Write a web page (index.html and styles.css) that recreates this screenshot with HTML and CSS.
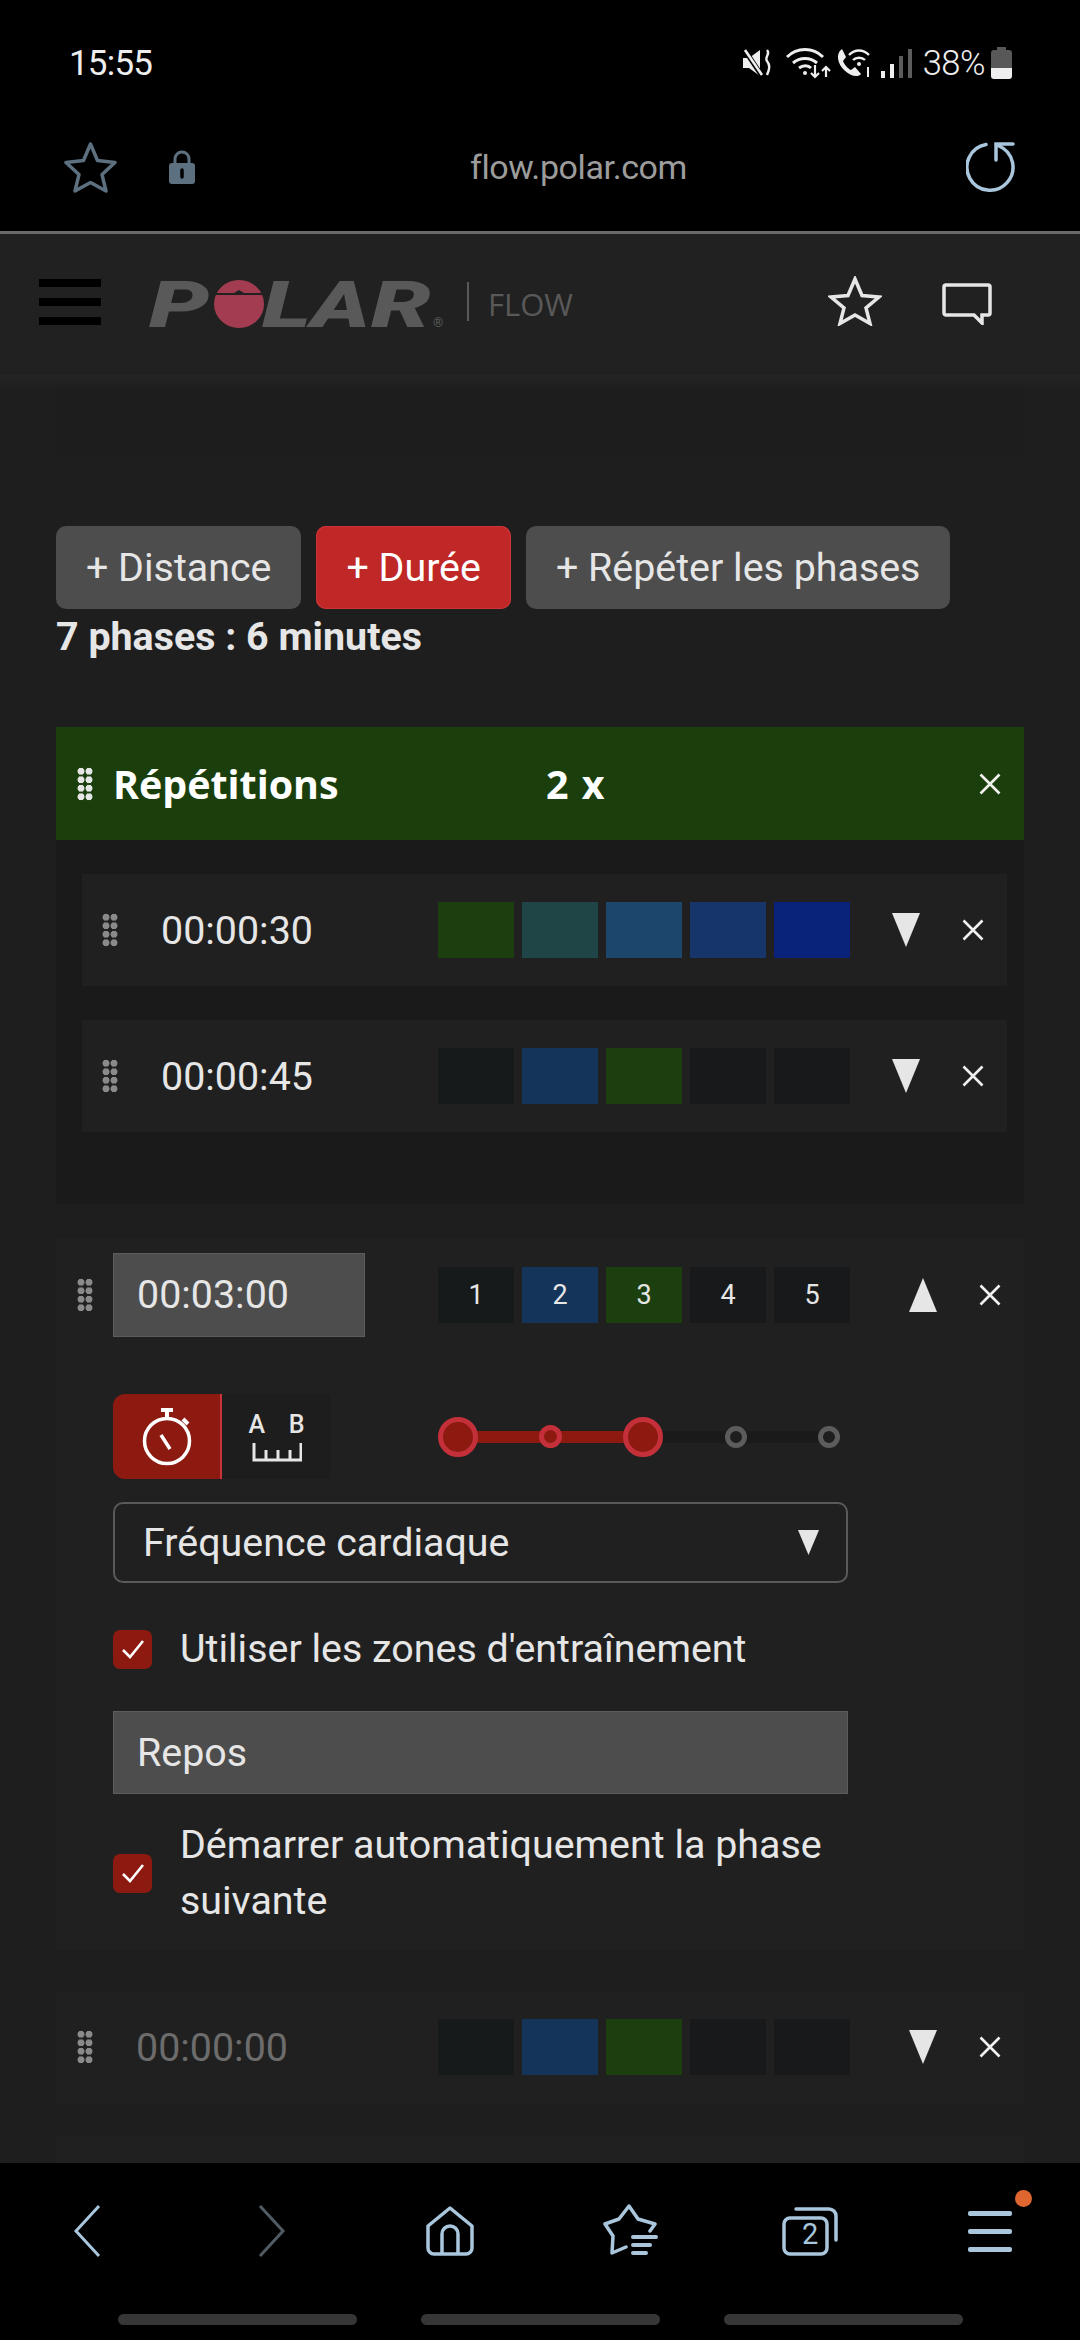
FILE: index.html
```html
<!DOCTYPE html>
<html lang="fr">
<head>
    <meta charset="UTF-8">
    <meta name="viewport" content="width=device-width, initial-scale=1.0">
    <title>Polar Flow</title>
    <link rel="stylesheet" href="styles.css">
</head>
<body>
    <svg class="defs" width="0" height="0">
        <symbol id="close" viewBox="0 0 22 22"><path d="M1.500 1.500l19 19M20.500 1.500l-19 19" fill="none" stroke="currentColor" stroke-width="2.600"/></symbol>
        <symbol id="check" viewBox="0 0 26 22"><path d="M3 12l7 7L23 3" fill="none" stroke="currentColor" stroke-width="2.600"/></symbol>
    </svg>
    <div class="phone">
        <!-- Android status bar -->
        <div class="status-bar">
            <span class="clock">15:55</span>
            <div class="status-icons">
                <svg class="ico-mute" width="29" height="28" viewBox="0 0 29 28">
                    <path d="M0 9h6L17 1v26L6 19H0z" fill="#eee"/>
                    <path d="M1 0l18 27" stroke="#000" stroke-width="5"/>
                    <path d="M2 1l17 25" stroke="#eee" stroke-width="2.600"/>
                    <path d="M24 1c4 4-3 7 0 11s3 7 0 14" fill="none" stroke="#eee" stroke-width="2.400"/>
                </svg>
                <svg class="ico-wifi" width="45" height="31" viewBox="0 0 45 31">
                    <path d="M1 9c10-10 26-10 36 0M7 15c7-6 17-6 24 0M13 20c4-3 9-3 12 0" fill="none" stroke="#eee" stroke-width="3"/>
                    <circle cx="19" cy="25" r="2" fill="#eee"/>
                    <path d="M29 17v12M25 25l4 4 4-4M40 29V19M36 23l4-4 4 4" fill="none" stroke="#eee" stroke-width="2.200"/>
                </svg>
                <svg class="ico-call" width="36" height="30" viewBox="0 0 36 30">
                    <path d="M7 1C0 6 3 16 9 22s14 8 17 4l-6-7-4 3c-3-1-7-6-8-9l3-4z" fill="#eee"/>
                    <path d="M14 7c6-6 14-6 20 0M18 12c3-3 9-3 12 0" fill="none" stroke="#eee" stroke-width="2.400"/>
                    <circle cx="24" cy="16" r="2" fill="#eee"/>
                    <path d="M33 19v10" stroke="#eee" stroke-width="2"/>
                </svg>
                <div class="signal">
                    <i class="bar bar-1"></i><i class="bar bar-2"></i><i class="bar bar-3"></i><i class="bar bar-4"></i>
                </div>
                <span class="battery-text">38%</span>
                <svg class="ico-battery" width="21" height="32" viewBox="0 0 21 32">
                    <path d="M6 0h9v3h3a3 3 0 0 1 3 3v15H0V6a3 3 0 0 1 3-3h3z" fill="#585858"/>
                    <path d="M0 21h21v8a3 3 0 0 1-3 3H3a3 3 0 0 1-3-3z" fill="#eee"/>
                </svg>
            </div>
        </div>

        <!-- Browser address bar -->
        <div class="address-bar">
            <svg class="ico-fav" width="55" height="52" viewBox="0 0 55 52">
                <path d="M27.500 3l7 16.500 17.500 2-13 12 4 16.500-15.500-8.500L12 50l4-16.500-13-12 17.500-2z" fill="none" stroke="#5d7080" stroke-width="3.500" stroke-linejoin="round"/>
            </svg>
            <svg class="ico-lock" width="26" height="34" viewBox="0 0 26 34">
                <path d="M6 15V9a7 7 0 0 1 14 0v6" fill="none" stroke="#5d7080" stroke-width="3"/>
                <path d="M3 13h20a3 3 0 0 1 3 3v15a3 3 0 0 1-3 3H3a3 3 0 0 1-3-3V16a3 3 0 0 1 3-3z" fill="#5d7080"/>
                <path d="M13 20v7" stroke="#000" stroke-width="3.500" stroke-linecap="round"/>
            </svg>
            <span class="url">flow.polar.com</span>
            <svg class="ico-reload" width="50" height="50" viewBox="0 0 50 50">
                <path d="M20 2.500A23 23 0 1 0 33 4M47 2H30v16" fill="none" stroke="#a9c6dc" stroke-width="3.500" stroke-linecap="round"/>
            </svg>
        </div>

        <!-- Page -->
        <div class="page">
            <div class="site-header">
                <div class="hamburger"><i></i><i></i><i></i></div>
                <svg class="polar-logo" width="300" height="52" viewBox="0 0 300 52">
                    <text class="polar-letters" x="-2" y="49" textLength="60" lengthAdjust="spacingAndGlyphs">P</text>
                    <ellipse cx="88" cy="26" rx="25" ry="24" fill="#a33c50"/>
                    <path d="M63 15h20l5-3 5 3h20v2H63z" fill="#212121"/>
                    <text class="polar-letters" x="111" y="49" textLength="49" lengthAdjust="spacingAndGlyphs">L</text>
                    <text class="polar-letters" x="160" y="49" textLength="59" lengthAdjust="spacingAndGlyphs">A</text>
                    <text class="polar-letters" x="220" y="49" textLength="60" lengthAdjust="spacingAndGlyphs">R</text>
                    <text class="polar-reg" x="282" y="49">®</text>
                </svg>
                <span class="flow-label">FLOW</span>
                <svg class="ico-star" width="54" height="50" viewBox="0 0 54 50">
                    <path d="M27 3l7 16.500 17 1.500-13 11 4 15.500-15-8.500-15 8.500 4-15.500L3 21l17-1.500z" fill="none" stroke="#e6e6e6" stroke-width="3.500"/>
                </svg>
                <svg class="ico-chat" width="50" height="42" viewBox="0 0 50 42">
                    <path d="M4 2h42a2 2 0 0 1 2 2v26a2 2 0 0 1-2 2h-6v8l-8-8H4a2 2 0 0 1-2-2V4a2 2 0 0 1 2-2z" fill="none" stroke="#e6e6e6" stroke-width="3.500"/>
                </svg>
            </div>

            <div class="top-band"><div class="top-strip"></div></div>

            <div class="add-buttons">
                <button class="add-btn">+ Distance</button>
                <button class="add-btn add-btn-red">+ Durée</button>
                <button class="add-btn">+ Répéter les phases</button>
            </div>
            <div class="summary">7 phases : 6 minutes</div>

            <div class="repeat-head">
                <div class="grip grip-light"></div>
                <span class="repeat-title">Répétitions</span>
                <span class="repeat-count">2 x</span>
                <svg class="close"><use href="#close"/></svg>
            </div>
            <div class="repeat-body">
                <div class="phase-row inner">
                    <div class="grip"></div>
                    <span class="time">00:00:30</span>
                    <div class="zones">
                        <div class="zone z-green"></div>
                        <div class="zone z-teal"></div>
                        <div class="zone z-sky"></div>
                        <div class="zone z-blue"></div>
                        <div class="zone z-navy"></div>
                    </div>
                    <div class="tri tri-down"></div>
                    <svg class="close"><use href="#close"/></svg>
                </div>
                <div class="phase-row inner">
                    <div class="grip"></div>
                    <span class="time">00:00:45</span>
                    <div class="zones">
                        <div class="zone z-off1"></div>
                        <div class="zone z-mid"></div>
                        <div class="zone z-green"></div>
                        <div class="zone z-off2"></div>
                        <div class="zone z-off2"></div>
                    </div>
                    <div class="tri tri-down"></div>
                    <svg class="close"><use href="#close"/></svg>
                </div>
            </div>

            <!-- Expanded phase -->
            <div class="panel expanded">
                <div class="phase-row open">
                    <div class="grip"></div>
                    <div class="time-input">00:03:00</div>
                    <div class="zones">
                        <div class="zone z-off1">1</div>
                        <div class="zone z-mid">2</div>
                        <div class="zone z-green">3</div>
                        <div class="zone z-off2">4</div>
                        <div class="zone z-off2">5</div>
                    </div>
                    <div class="tri tri-up"></div>
                    <svg class="close"><use href="#close"/></svg>
                </div>

                <div class="form">
                    <div class="type-row">
                        <div class="type-tabs">
                            <div class="type-tab active">
                                <svg width="50" height="58" viewBox="0 0 50 58">
                                    <path d="M19 2h12M25 2v8M41 11l5 5" fill="none" stroke="#fff" stroke-width="4"/>
                                    <circle cx="25" cy="33" r="22.500" fill="none" stroke="#fff" stroke-width="3.500"/>
                                    <path d="M19 27l9 14" stroke="#fff" stroke-width="3.500"/>
                                </svg>
                            </div>
                            <div class="type-tab">
                                <div class="ab"><span>A</span><span>B</span></div>
                                <svg width="50" height="20" viewBox="0 0 50 20">
                                    <path d="M2 1v17h47V1M14 8v10M26 8v10M38 8v10" fill="none" stroke="#e6e6e6" stroke-width="3"/>
                                </svg>
                            </div>
                        </div>
                        <div class="slider">
                            <div class="handle big"></div>
                            <div class="handle small"></div>
                            <div class="handle big"></div>
                            <div class="handle off"></div>
                            <div class="handle off"></div>
                        </div>
                    </div>

                    <div class="select">
                        <span>Fréquence cardiaque</span>
                        <div class="tri tri-select"></div>
                    </div>

                    <label class="check-row first">
                        <span class="checkbox"><svg width="26" height="22"><use href="#check"/></svg></span>
                        <span>Utiliser les zones d'entraînement</span>
                    </label>

                    <div class="name-input">Repos</div>

                    <label class="check-row second">
                        <span class="checkbox"><svg width="26" height="22"><use href="#check"/></svg></span>
                        <span>Démarrer automatiquement la phase suivante</span>
                    </label>
                </div>
            </div>

            <div class="panel collapsed">
                <div class="phase-row open">
                    <div class="grip"></div>
                    <span class="time muted">00:00:00</span>
                    <div class="zones">
                        <div class="zone z-off1"></div>
                        <div class="zone z-mid"></div>
                        <div class="zone z-green"></div>
                        <div class="zone z-off2"></div>
                        <div class="zone z-off2"></div>
                    </div>
                    <div class="tri tri-down"></div>
                    <svg class="close"><use href="#close"/></svg>
                </div>
            </div>
            <div class="panel peek"></div>
        </div>

        <!-- Browser bottom bar -->
        <div class="bottom-bar">
            <div class="nav-grid">
                <div class="nav-item nav-back">
                    <svg width="28" height="54" viewBox="0 0 28 54"><path d="M26 2L3 27l23 25" fill="none" stroke="#a9c6dc" stroke-width="3"/></svg>
                </div>
                <div class="nav-item nav-forward">
                    <svg width="28" height="54" viewBox="0 0 28 54"><path d="M2 2l23 25L2 52" fill="none" stroke="#515b63" stroke-width="3"/></svg>
                </div>
                <div class="nav-item">
                    <svg width="50" height="50" viewBox="0 0 50 50"><path d="M25 2L3 20v22a6 6 0 0 0 6 6h32a6 6 0 0 0 6-6V20zM17 47V28a8 8 0 0 1 16 0v19" fill="none" stroke="#a9c6dc" stroke-width="3.500" stroke-linejoin="round"/></svg>
                </div>
                <div class="nav-item">
                    <svg width="56" height="54" viewBox="0 0 56 54"><path d="M48 27l5-7-17-5L27 2 17 15 3 20l8 12-1 17 14-6" fill="none" stroke="#a9c6dc" stroke-width="3.500" stroke-linejoin="round" stroke-linecap="round"/><path d="M31 33h23M31 41h17M31 49h13" stroke="#a9c6dc" stroke-width="4" stroke-linecap="round"/></svg>
                </div>
                <div class="nav-item tabs-ico">
                    <svg width="56" height="50" viewBox="0 0 56 50"><rect x="2" y="12" width="43" height="36" rx="6" fill="none" stroke="#a9c6dc" stroke-width="3.500"/><path d="M14 3h33a7 7 0 0 1 7 7v24" fill="none" stroke="#a9c6dc" stroke-width="3.500" stroke-linecap="round"/></svg>
                    <span class="tab-count">2</span>
                </div>
                <div class="nav-item menu-ico">
                    <i></i><i></i><i></i>
                    <span class="notify-dot"></span>
                </div>
            </div>
            <div class="home-pills"><i></i><i></i><i></i></div>
        </div>
    </div>
</body>
</html>
```

FILE: styles.css
```css
/* General */
body {
    margin: 0;
    background: #000;
    font-family: 'Roboto', sans-serif;
    color: #e6e6e6;
}

.defs {
    position: absolute;
}

.phone {
    width: 1080px;
    height: 2340px;
    display: flex;
    flex-direction: column;
    overflow: hidden;
}

/* Status bar */
.status-bar {
    height: 126px;
    box-sizing: border-box;
    padding: 46px 68px 0 69px;
    display: flex;
    justify-content: space-between;
    align-items: flex-start;
    background: #000;
}

.clock {
    font-size: 35px;
    line-height: 36px;
    letter-spacing: -0.8px;
    color: #eee;
}

.status-icons {
    display: flex;
    align-items: center;
    height: 34px;
}

.ico-wifi {
    margin-left: 14px;
}

.ico-call {
    margin-left: 4px;
}

.signal {
    display: flex;
    align-items: flex-end;
    gap: 5px;
    height: 29px;
    margin-left: 10px;
}

.bar {
    width: 4px;
    background: #5c5c5c;
}

.bar-1 {
    height: 7px;
    background: #eee;
}

.bar-2 {
    height: 14px;
    background: #eee;
}

.bar-3 {
    height: 22px;
}

.bar-4 {
    height: 29px;
}

.battery-text {
    margin-left: 11px;
    font-size: 34.500px;
    font-weight: 300;
    letter-spacing: -0.5px;
    color: #eee;
}

.ico-battery {
    margin-left: 6px;
}

/* Address bar */
.address-bar {
    height: 108px;
    box-sizing: border-box;
    padding: 0 64px 23px 63px;
    display: flex;
    align-items: center;
    background: #000;
    border-bottom: 3px solid #6a6a6a;
}

.ico-lock {
    margin-left: 51px;
}

.url {
    flex: 1;
    text-align: center;
    padding-right: 4px;
    font-size: 34px;
    letter-spacing: -0.4px;
    color: #9c9c9c;
}

/* Page */
.page {
    flex: 1;
    min-height: 0;
    overflow: hidden;
    background: #1e1e1e;
}

.site-header {
    height: 141px;
    box-sizing: border-box;
    padding: 0 88px 0 39px;
    display: flex;
    align-items: flex-start;
    background: #212121;
}

.hamburger {
    width: 62px;
    margin-top: 45px;
    display: flex;
    flex-direction: column;
    gap: 11px;
}

.hamburger i {
    display: block;
    height: 8px;
    background: #000;
}

.polar-logo {
    margin: 44px 0 0 50px;
    overflow: visible;
}

.polar-letters {
    font-family: 'Roboto', sans-serif;
    font-size: 65px;
    font-weight: 900;
    font-style: italic;
    fill: #595959;
}

.polar-reg {
    font-size: 13px;
    fill: #595959;
}

.flow-label {
    margin: 48px 0 0 16px;
    padding-left: 19px;
    height: 39px;
    line-height: 44px;
    border-left: 2px solid #595959;
    font-family: 'Open Sans', sans-serif;
    font-size: 31px;
    color: #595959;
}

.ico-star {
    margin: 42px 0 0 auto;
}

.ico-chat {
    margin: 49px 0 0 60px;
}

.top-band {
    height: 80px;
    box-sizing: border-box;
    padding: 14px 56px 0;
    background: linear-gradient(#242424, #1e1e1e 14px);
}

.top-strip {
    height: 66px;
    background: #1d1d1d;
}

.add-buttons {
    display: flex;
    gap: 15px;
    margin: 71px 56px 0;
}

.add-btn {
    height: 83px;
    padding: 0 30px;
    border: none;
    border-radius: 10px;
    background: #4d4d4d;
    color: #e6e6e6;
    font-family: 'Roboto', sans-serif;
    font-size: 39.400px;
}

.add-btn-red {
    background: #c02727;
    color: #fff;
    box-shadow: inset 0 0 0 1px #cb3539;
}

.summary {
    margin: 6px 56px 0;
    line-height: 44px;
    font-size: 39.400px;
    font-weight: 700;
}

/* Repeat block */
.repeat-head {
    height: 113px;
    margin: 68px 56px 0;
    padding: 0 23px 0 21px;
    display: flex;
    align-items: center;
    background: #1a3f0c;
    color: #fff;
}

.grip {
    flex: none;
    width: 16px;
    height: 34px;
    background: radial-gradient(circle, #8a8a8a 3.200px, transparent 3.800px) 0 0 / 8px 8.500px;
}

.grip-light {
    background-image: radial-gradient(circle, #e6e6e6 3.200px, transparent 3.800px);
}

.repeat-title {
    width: 433px;
    margin-left: 20px;
    font-family: 'Open Sans', sans-serif;
    font-size: 39.400px;
    font-weight: 700;
    white-space: nowrap;
}

.repeat-count {
    flex: 1;
    font-family: 'Open Sans', sans-serif;
    font-size: 39.400px;
    font-weight: 700;
    word-spacing: 3px;
}

.close {
    flex: none;
    width: 22px;
    height: 22px;
    color: #f0f0f0;
}

.repeat-body {
    margin: 0 56px;
    padding: 34px 17px 72px 26px;
    display: flex;
    flex-direction: column;
    gap: 34px;
    background: #1a1a1a;
}

.phase-row {
    height: 112px;
    box-sizing: border-box;
    padding-right: 23px;
    display: flex;
    align-items: center;
}

.phase-row.inner {
    padding-left: 20px;
    background: #202020;
}

.phase-row.open {
    padding-left: 21px;
}

.time {
    flex: 1;
    margin-left: 43px;
    font-size: 39.400px;
}

.time.muted {
    color: #6c6c6c;
}

.zones {
    display: flex;
    gap: 8px;
}

.zone {
    width: 76px;
    height: 56px;
    display: flex;
    align-items: center;
    justify-content: center;
    font-size: 27px;
}

.z-green { background: #1c3f0f; }
.z-teal { background: #1f4546; }
.z-sky { background: #1d466d; }
.z-blue { background: #15356b; }
.z-navy { background: #082379; }
.z-mid { background: #14345a; }
.z-off1 { background: #161a1a; }
.z-off2 { background: #18191b; }

.tri {
    flex: none;
    width: 28px;
    height: 34px;
    background: #e6e6e6;
}

.tri-down {
    margin: 0 42px 0 42px;
    clip-path: polygon(0 0, 100% 0, 50% 100%);
}

.tri-up {
    margin: 0 42px 0 59px;
    clip-path: polygon(50% 0, 100% 100%, 0 100%);
}

.open .tri-down {
    margin-left: 59px;
}

/* Panels */
.panel {
    margin: 34px 56px 0;
    background: #202020;
}

.expanded {
    height: 712px;
}

.expanded .phase-row {
    height: 114px;
}

.time-input {
    flex: 1;
    margin-right: 73px;
    margin-left: 20px;
    height: 84px;
    line-height: 84px;
    padding-left: 24px;
    box-sizing: border-box;
    box-shadow: inset 0 0 0 1px #5c5c5c;
    background: #4d4d4d;
    font-size: 39.400px;
}

.form {
    padding: 42px 176px 0 57px;
}

.type-row {
    display: flex;
    height: 85px;
}

.type-tabs {
    flex: none;
    display: flex;
}

.type-tab {
    width: 109px;
    height: 85px;
    box-sizing: border-box;
    display: flex;
    flex-direction: column;
    align-items: center;
    justify-content: center;
    background: #1d1d1d;
}

.type-tab.active {
    background: #8c1a10;
    border-right: 2px solid #c8323a;
    border-radius: 12px 0 0 12px;
}

.ab {
    width: 56px;
    display: flex;
    justify-content: space-between;
    margin-bottom: 4px;
    line-height: 26px;
    font-size: 25px;
    font-weight: 500;
}

.slider {
    flex: none;
    margin-left: 81px;
    width: 463px;
    display: grid;
    grid-template-columns: repeat(5, 1fr);
    align-items: center;
    justify-items: center;
    background: linear-gradient(to right, transparent 46px, #8c1a10 46px, #8c1a10 231px, #1a1a1a 231px, #1a1a1a 417px, transparent 417px) center / 100% 12px no-repeat;
}

.handle {
    box-sizing: border-box;
    border-radius: 50%;
}

.handle.big {
    width: 40px;
    height: 40px;
    border: 5px solid #c4303a;
    background: #8c1a10;
}

.handle.small {
    width: 23px;
    height: 23px;
    border: 5px solid #c4303a;
    background: #8c1a10;
}

.handle.off {
    width: 22px;
    height: 22px;
    border: 5px solid #5c5c5c;
    background: #1e1e1e;
}

.select {
    height: 81px;
    box-sizing: border-box;
    margin-top: 23px;
    padding: 0 27px 0 28px;
    display: flex;
    align-items: center;
    justify-content: space-between;
    border: 2px solid #5a5a5a;
    border-radius: 10px;
    font-size: 39.400px;
}

.tri-select {
    width: 21px;
    height: 25px;
    clip-path: polygon(0 0, 100% 0, 50% 100%);
}

.check-row {
    display: flex;
    align-items: center;
    gap: 28px;
    font-size: 39.400px;
    line-height: 56px;
}

.check-row.first {
    margin-top: 38px;
}

.check-row.second {
    margin-top: 23px;
}

.checkbox {
    flex: none;
    width: 39px;
    height: 39px;
    display: flex;
    align-items: center;
    justify-content: center;
    border-radius: 7px;
    background: #8c1a10;
    color: #fff;
}

.name-input {
    height: 83px;
    margin-top: 34px;
    padding-left: 24px;
    line-height: 83px;
    box-shadow: inset 0 0 0 1px #5c5c5c;
    background: #4d4d4d;
    font-size: 39.400px;
}

.collapsed {
    margin-top: 41px;
}

.peek {
    margin-top: 33px;
    height: 60px;
}

/* Bottom bar */
.bottom-bar {
    height: 177px;
    display: flex;
    flex-direction: column;
    background: #000;
}

.nav-grid {
    height: 136px;
    display: grid;
    grid-template-columns: repeat(6, 1fr);
    align-items: center;
}

.nav-item {
    position: relative;
    display: flex;
    flex-direction: column;
    align-items: center;
    justify-content: center;
}

.nav-back {
    padding-right: 6px;
}

.nav-forward {
    padding-left: 4px;
}

.tabs-ico .tab-count {
    position: absolute;
    left: 82px;
    top: 10px;
    font-size: 29px;
    line-height: 36px;
    color: #a9c6dc;
}

.menu-ico {
    gap: 13px;
}

.menu-ico i {
    display: block;
    width: 44px;
    height: 5px;
    border-radius: 2px;
    background: #a9c6dc;
}

.notify-dot {
    position: absolute;
    top: -21px;
    right: 48px;
    width: 17px;
    height: 17px;
    border-radius: 50%;
    background: #e0662f;
}

.home-pills {
    display: flex;
    justify-content: center;
    gap: 64px;
    margin-top: 15px;
}

.home-pills i {
    display: block;
    width: 239px;
    height: 11px;
    border-radius: 6px;
    background: #363636;
}
```
